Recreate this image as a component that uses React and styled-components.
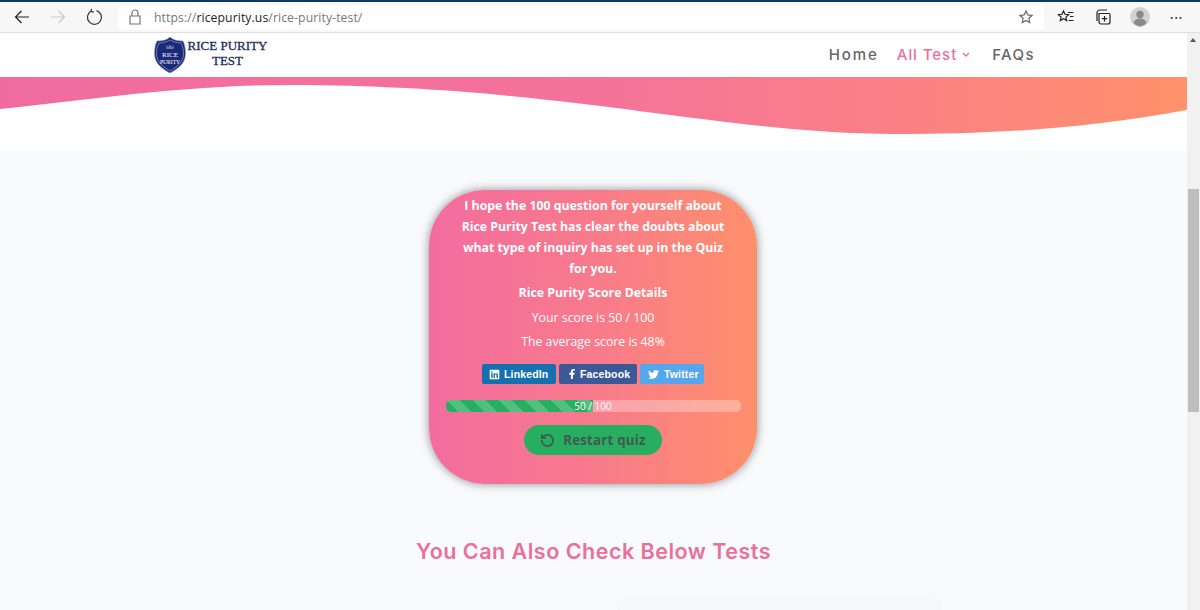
import React from 'react'
import styled, { createGlobalStyle } from 'styled-components'
import { FaLinkedin, FaFacebookF, FaTwitter } from 'react-icons/fa'

const pink = '#ea6f9b'
const grad = 'linear-gradient(90deg, #f36c9f 0%, #f87a8c 50%, #ff906b 100%)'

const Global = createGlobalStyle`
  html, body { margin: 0; padding: 0; background: #fff; overflow: hidden; }
  * { box-sizing: border-box; }
`
const Window = styled.div`
  width: 1200px;
  height: 610px;
  overflow: hidden;
  display: flex;
  flex-direction: column;
  font-family: "Open Sans", sans-serif;
`
const Toolbar = styled.div`
  height: 33px;
  flex: none;
  display: flex;
  align-items: center;
  padding: 0 0 0 13px;
  background: #f7f7f7;
  border-top: 2px solid #12395c;
  border-bottom: 1px solid #dedede;
`
const NavIcon = styled.svg`
  width: 18px;
  height: 18px;
  margin-right: ${p => p.$gap || 0}px;
  flex: none;
  fill: none;
  stroke: ${p => p.$color || '#333'};
  stroke-width: 1.2;
`
const AddressBar = styled.div`
  width: 926px;
  height: 25px;
  margin: 0 13px 0 -3px;
  padding: 0 9px 0 8px;
  background: #fff;
  border-radius: 4px;
  display: flex;
  align-items: center;
`
const Url = styled.div`
  flex: 1;
  margin-left: 10px;
  font-size: 12.2px;
  letter-spacing: 0.1px;
  color: #777;
  b { font-weight: 400; color: #222; }
`
const Avatar = styled.svg`
  width: 20px;
  height: 20px;
  margin-right: 20px;
  flex: none;
`
const Dots = styled.div`
  color: #444;
  font-size: 9px;
  letter-spacing: 1px;
  line-height: 1;
`
const Body = styled.div`
  flex: 1;
  min-height: 0;
  display: flex;
`
const Page = styled.div`
  flex: 1;
  min-width: 0;
  display: flex;
  flex-direction: column;
  background: #f9fafc;
`
const Header = styled.header`
  height: 44px;
  flex: none;
  background: #fff;
  display: flex;
  align-items: center;
  justify-content: space-between;
  padding: 0 152px 0 154px;
`
const Brand = styled.div`
  display: flex;
  align-items: center;
`
const BrandName = styled.div`
  font-family: "Liberation Serif", serif;
  font-size: 13px;
  line-height: 15px;
  font-weight: 400;
  -webkit-text-stroke: 0.3px #1c2c5e;
  color: #1c2c5e;
  text-align: center;
  width: 83px;
  margin-top: -5px;
`
const Menu = styled.nav`
  display: flex;
  align-items: center;
  gap: 18px;
  margin-top: -1px;
`
const MenuItem = styled.a`
  font-family: Inter, sans-serif;
  font-size: 15px;
  font-weight: 500;
  letter-spacing: ${p => p.$track}px;
  color: ${p => (p.$active ? pink : '#666')};
  display: flex;
  align-items: center;
  gap: 5px;
`
const Chevron = styled.svg`
  width: 8px;
  height: 6px;
  margin-right: 4px;
  fill: none;
  stroke: ${pink};
  stroke-width: 1.3;
`
const WaveBand = styled.div`
  height: 74px;
  flex: none;
  background: #fff;
  svg { display: block; }
`
const Main = styled.main`
  flex: 1;
  display: flex;
  flex-direction: column;
  align-items: center;
  padding-top: 39px;
`
const Card = styled.section`
  width: 328px;
  height: 294px;
  margin-left: -1px;
  border-radius: 56px;
  background: ${grad};
  box-shadow: 0 0 10px rgba(60, 70, 80, 0.6);
  padding: 5px 16px 0;
  color: #fff;
  display: flex;
  flex-direction: column;
  align-items: center;
  text-align: center;
`
const Lead = styled.p`
  margin: 0;
  font-size: 12.3px;
  font-weight: 700;
  line-height: 21px;
  width: 280px;
`
const Line = styled.p`
  margin: ${p => p.$top}px 0 0;
  font-size: 12.3px;
  line-height: 18px;
  font-weight: ${p => (p.$bold ? 700 : 400)};
`
const Shares = styled.div`
  display: flex;
  gap: 3px;
  margin-top: 13px;
`
const Share = styled.a`
  height: 20px;
  width: ${p => p.$w}px;
  padding-left: ${p => p.$pad}px;
  display: flex;
  align-items: center;
  gap: ${p => p.$gap}px;
  border-radius: 2px;
  background: ${p => p.$bg};
  color: #fff;
  font-family: "Liberation Sans", sans-serif;
  font-size: 10.5px;
  font-weight: 700;
  letter-spacing: 0.15px;
`
const Progress = styled.div`
  position: relative;
  width: 295px;
  height: 12px;
  margin-top: 16px;
  border-radius: 5px;
  overflow: hidden;
  background: rgba(255, 255, 255, 0.3);
`
const Fill = styled.div`
  height: 100%;
  background-color: #27ae60;
  background-image: linear-gradient(45deg, rgba(255,255,255,.2) 25%, transparent 25%, transparent 50%, rgba(255,255,255,.2) 50%, rgba(255,255,255,.2) 75%, transparent 75%);
  background-size: 26px 26px;
`
const ProgressLabel = styled.span`
  position: absolute;
  inset: 0;
  text-align: center;
  font-size: 10px;
  line-height: 12px;
  color: #fff;
`
const Restart = styled.button`
  width: 138px;
  height: 30px;
  margin-top: 13px;
  padding: 0;
  border: 0;
  border-radius: 15px;
  background: #27ae60;
  color: #3f5a52;
  font-family: "Open Sans", sans-serif;
  font-size: 13.3px;
  font-weight: 700;
  letter-spacing: 0.2px;
  display: flex;
  align-items: center;
  justify-content: center;
  gap: 8px;
`
const Title = styled.h2`
  margin: 53px 0 0;
  font-family: Inter, sans-serif;
  font-size: 21.5px;
  line-height: 28px;
  font-weight: 600;
  letter-spacing: 0.5px;
  color: ${pink};
`
const NextRow = styled.div`
  width: 100%;
  margin-top: 34px;
  padding-left: 620px;
`
const NextCard = styled.div`
  width: 318px;
  height: 60px;
  background: #f8f9fb;
  box-shadow: 0 0 8px rgba(0, 0, 0, 0.03);
`
const Scrollbar = styled.div`
  width: 13px;
  flex: none;
  background: #f1f1f1;
  padding: 156px 1px 0;
  position: relative;
`
const Arrow = styled.span`
  position: absolute;
  top: 5px;
  left: 3px;
  border: 3.5px solid transparent;
  border-top: 0;
  border-bottom: 4px solid #555;
`
const Thumb = styled.div`
  height: 223px;
  background: #bdbdbd;
`

const Shield = () => (
  <svg width="32" height="38" viewBox="0 0 32 38">
    <path d="M16 1 C19 4 24 5 29 5 C31 9 31.5 13 31.5 18 C31.5 27 24 33 16 37 C8 33 .5 27 .5 18 C.5 13 1 9 3 5 C8 5 13 4 16 1Z" fill="#1b2a78" stroke="#9aa0c4" strokeWidth=".6" />
    <path d="M16 4 C19 6 24 7 27 7 C29 11 29.5 14 29.5 18 C29.5 26 23 31 16 35 C9 31 2.5 26 2.5 18 C2.5 14 3 11 5 7 C8 7 13 6 16 4Z" fill="none" stroke="#c9cde6" strokeWidth=".5" />
    <path d="M12 9 L14 11 L16 8.5 L18 11 L20 9 L19.5 13 L12.5 13Z" fill="#6d76ad" />
    <text x="16" y="21" textAnchor="middle" fontFamily="Liberation Serif, serif" fontSize="7" fill="#fff">RICE</text>
    <text x="16" y="27.5" textAnchor="middle" fontFamily="Liberation Serif, serif" fontSize="5.6" fill="#fff">PURITY</text>
  </svg>
)

export default function App() {
  return (
    <Window>
      <Global />
      <Toolbar>
        <NavIcon $gap={18} viewBox="0 0 18 18" $color="#222">
          <path d="M16 9H2.500M8.500 3 2.500 9l6 6" />
        </NavIcon>
        <NavIcon $gap={18} viewBox="0 0 18 18" $color="#c9c9c9">
          <path d="M2 9h13.500M9.500 3l6 6-6 6" />
        </NavIcon>
        <NavIcon $gap={18} viewBox="0 0 18 18">
          <path d="M6 3.200A7 7 0 1 0 11.500 2.600M6.500 .8 6 3.400l2.800.8" />
        </NavIcon>
        <AddressBar>
          <NavIcon viewBox="0 0 18 18" $color="#777">
            <path d="M4 8h10v8H4zM6 8V5a3 3 0 0 1 6 0v3" />
          </NavIcon>
          <Url>https://<b>ricepurity.us</b>/rice-purity-test/</Url>
          <NavIcon viewBox="0 0 18 18" $color="#666">
            <path d="m9 3 1.800 3.900 4.200.5-3.100 2.900.8 4.200L9 12.400l-3.700 2.100.8-4.200L3 7.400l4.200-.5z" />
          </NavIcon>
        </AddressBar>
        <NavIcon $gap={19} viewBox="0 0 18 18" $color="#222">
          <path d="m6.500 3 1.500 3.300 3.600.4-2.700 2.400.8 3.500-3.200-1.800-3.200 1.800.8-3.500L1.400 6.700 5 6.300zM11 4.500h5.500M13 8.500h3.500M11.500 12.500h5" />
        </NavIcon>
        <NavIcon $gap={18} viewBox="0 0 18 18" $color="#222">
          <path d="M5 5.500h10a1.500 1.500 0 0 1 1 1.500v7a2 2 0 0 1-2 2H7a2 2 0 0 1-2-2zM3 13V5a3 3 0 0 1 3-3h7M10.500 8v5.500M7.800 10.700h5.400" />
        </NavIcon>
        <Avatar viewBox="0 0 20 20">
          <circle cx="10" cy="10" r="10" fill="#d2d2d2" />
          <circle cx="10" cy="7.500" r="3.700" fill="#8a8a8a" />
          <path d="M3.500 16c1-3.500 3.500-4.500 6.500-4.500s5.500 1 6.500 4.500A9.500 9.500 0 0 1 10 19.500 9.500 9.500 0 0 1 3.500 16Z" fill="#8a8a8a" />
        </Avatar>
        <Dots>•••</Dots>
      </Toolbar>
      <Body>
        <Page>
          <Header>
            <Brand>
              <Shield />
              <BrandName>RICE PURITY TEST</BrandName>
            </Brand>
            <Menu>
              <MenuItem $track={1.95}>Home</MenuItem>
              <MenuItem $active $track={0.95}>
                All Test
                <Chevron viewBox="0 0 8 6"><path d="m1 1 3 3 3-3" /></Chevron>
              </MenuItem>
              <MenuItem $track={1.4}>FAQs</MenuItem>
            </Menu>
          </Header>
          <WaveBand>
            <svg width="1187" height="74" viewBox="0 77 1187 74">
              <defs>
                <linearGradient id="waveGrad" x1="0" x2="1" y1="0" y2="0">
                  <stop offset="0" stopColor="#f06c9f" />
                  <stop offset="0.5" stopColor="#f5729a" />
                  <stop offset="0.75" stopColor="#fb8086" />
                  <stop offset="1" stopColor="#ff916b" />
                </linearGradient>
              </defs>
              <path d="M0 77H1187V110C1090 128 1000 134 895 134C720 134 560 85 290 85C180 85 90 100 0 109Z" fill="url(#waveGrad)" />
            </svg>
          </WaveBand>
          <Main>
            <Card>
              <Lead>I hope the 100 question for yourself about Rice Purity Test has clear the doubts about what type of inquiry has set up in the Quiz for you.</Lead>
              <Line $bold $top={5}>Rice Purity Score Details</Line>
              <Line $top={7}>Your score is 50 / 100</Line>
              <Line $top={6}>The average score is 48%</Line>
              <Shares>
                <Share $bg="#1470ae" $w={74} $pad={7} $gap={4}><FaLinkedin size={11} />LinkedIn</Share>
                <Share $bg="#3b5998" $w={78} $pad={8} $gap={3}><FaFacebookF size={10} />Facebook</Share>
                <Share $bg="#55a6ec" $w={64} $pad={8} $gap={5}><FaTwitter size={11} />Twitter</Share>
              </Shares>
              <Progress>
                <Fill style={{ width: `${(50 / 100) * 100}%` }} />
                <ProgressLabel>50 / 100</ProgressLabel>
              </Progress>
              <Restart>
                <svg width="15" height="15" viewBox="0 0 24 24" fill="none" stroke="#3f5a52" strokeWidth="2.800" strokeLinecap="round" strokeLinejoin="round"><path d="M3 12a9 9 0 1 0 3-6.700L3 8" /><path d="M3 3v5h5" /></svg>
                Restart quiz
              </Restart>
            </Card>
            <Title>You Can Also Check Below Tests</Title>
            <NextRow>
              <NextCard />
            </NextRow>
          </Main>
        </Page>
        <Scrollbar>
          <Arrow />
          <Thumb />
        </Scrollbar>
      </Body>
    </Window>
  )
}
